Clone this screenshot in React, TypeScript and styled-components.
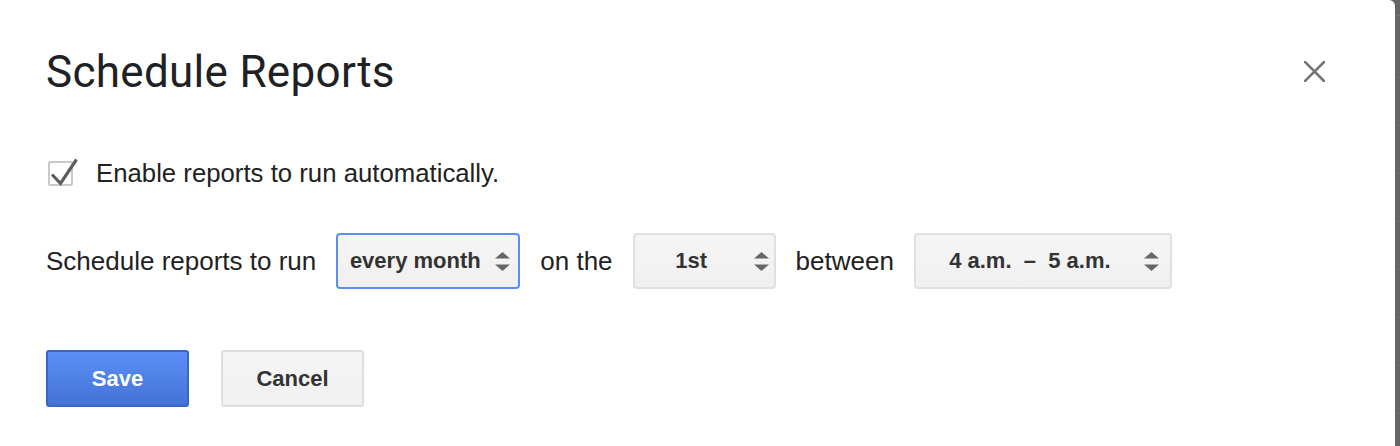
import styled, { createGlobalStyle } from 'styled-components';

const GlobalStyle = createGlobalStyle`
    html, body {
        margin: 0;
        padding: 0;
        height: 100%;
    }
    body {
        background: #656565;
        font-family: 'Liberation Sans', Arial, sans-serif;
        overflow: hidden;
    }
`;

const Page = styled.div`
    display: flex;
    height: 446px;
    background: repeating-linear-gradient(
        to bottom,
        #656565 0 29px,
        #6f6f6f 29px 30px,
        #656565 30px 48px
    );
    background-position: 0 48px;
`;

const Dialog = styled.div`
    width: 1395px;
    height: 446px;
    box-sizing: border-box;
    background: #ffffff;
    border-top-right-radius: 6px;
    padding: 47px 70px 0 46px;
    display: flex;
    flex-direction: column;
`;

const Header = styled.div`
    display: flex;
    align-items: center;
    justify-content: space-between;
`;

const Title = styled.h1`
    margin: 0;
    font-family: Roboto, 'Noto Sans', sans-serif;
    font-weight: 400;
    font-size: 44px;
    line-height: 50px;
    color: #202124;
    letter-spacing: 0.3px;
`;

const CloseButton = styled.button`
    display: flex;
    padding: 0;
    margin: -2px 0 0 0;
    border: none;
    background: none;
    cursor: pointer;
`;

const CheckRow = styled.label`
    display: flex;
    align-items: center;
    gap: 18px;
    margin-top: 61px;
    margin-left: 2px;
    height: 30px;
    font-size: 25.75px;
    color: #222222;
`;

const ScheduleRow = styled.div`
    display: flex;
    align-items: center;
    gap: 20px;
    margin-top: 45px;
    font-size: 26px;
    color: #222222;
`;

const Select = styled.div<{ $width: number; $focused?: boolean }>`
    position: relative;
    width: ${({ $width }) => $width}px;
    height: 56px;
    box-sizing: border-box;
    padding: 0 38px 0 12px;
    display: flex;
    align-items: center;
    justify-content: center;
    border: 2px solid ${({ $focused }) => ($focused ? '#5b8ff2' : '#e0e0e0')};
    border-radius: 4px;
    background: linear-gradient(to bottom, #f5f5f5, #f0f0f0);
    font-size: 22px;
    font-weight: 700;
    color: #333333;
    white-space: pre;
    cursor: pointer;
`;

const Arrows = styled.svg<{ $right: number }>`
    position: absolute;
    right: ${({ $right }) => $right}px;
    top: 50%;
    margin-top: -9px;
`;

const Buttons = styled.div`
    display: flex;
    gap: 32px;
    margin-top: 61px;
`;

const Button = styled.button<{ $primary?: boolean }>`
    width: 143px;
    height: 57px;
    box-sizing: border-box;
    border-radius: 3px;
    font-family: 'Liberation Sans', Arial, sans-serif;
    font-size: 22px;
    font-weight: 700;
    cursor: pointer;
    color: ${({ $primary }) => ($primary ? '#ffffff' : '#333333')};
    border: 2px solid ${({ $primary }) => ($primary ? '#3b66c8' : '#dedede')};
    background: ${({ $primary }) =>
        $primary
            ? 'linear-gradient(to bottom, #5b8ff5, #4473d8)'
            : 'linear-gradient(to bottom, #f5f5f5, #f0f0f0)'};
`;

const SelectArrows = ({ right }: { right: number }) => (
    <Arrows $right={right} width="15" height="19" viewBox="0 0 15 19">
        <polygon points="7.5,0 15,6.5 0,6.5" fill="#666666" />
        <polygon points="0,12.5 15,12.5 7.5,19" fill="#666666" />
    </Arrows>
);

const CheckIcon = () => (
    <svg width="30" height="30" viewBox="0 0 30 30">
        <rect x="1" y="4" width="23" height="23" rx="1" fill="#ffffff" stroke="#c9c9c9" strokeWidth="2" />
        <polyline
            points="4,16.5 12.5,25.5 28.5,1.5"
            fill="none"
            stroke="#5e5e5e"
            strokeWidth="3.2"
        />
    </svg>
);

export default function App() {
    return (
        <>
            <GlobalStyle />
            <Page>
                <Dialog>
                    <Header>
                        <Title>Schedule Reports</Title>
                        <CloseButton aria-label="Close">
                            <svg width="21" height="21" viewBox="0 0 21 21">
                                <path
                                    d="M1 1 L20 20 M20 1 L1 20"
                                    stroke="#757575"
                                    strokeWidth="2.6"
                                    strokeLinecap="square"
                                />
                            </svg>
                        </CloseButton>
                    </Header>
                    <CheckRow>
                        <CheckIcon />
                        <span>Enable reports to run automatically.</span>
                    </CheckRow>
                    <ScheduleRow>
                        <span>Schedule reports to run</span>
                        <Select $width={184} $focused>
                            every month
                            <SelectArrows right={8} />
                        </Select>
                        <span>on the</span>
                        <Select $width={143}>
                            1st
                            <SelectArrows right={5} />
                        </Select>
                        <span>between</span>
                        <Select $width={258}>
                            {'4 a.m.  \u2013  5 a.m.'}
                            <SelectArrows right={11} />
                        </Select>
                    </ScheduleRow>
                    <Buttons>
                        <Button $primary>Save</Button>
                        <Button>Cancel</Button>
                    </Buttons>
                </Dialog>
            </Page>
        </>
    );
}
